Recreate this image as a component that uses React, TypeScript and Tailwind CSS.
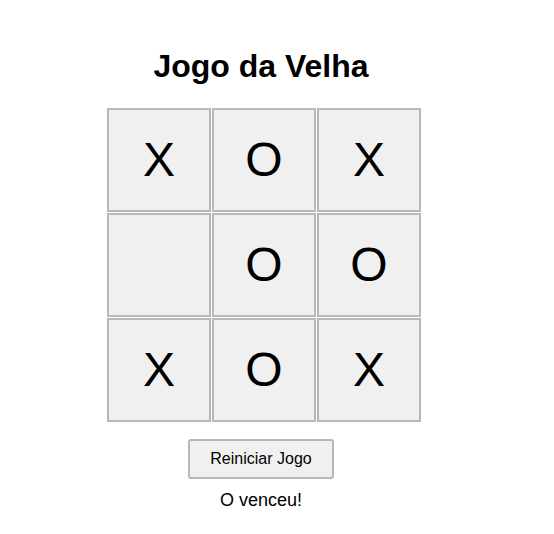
import React, { useState } from 'react';

type Cell = 'X' | 'O' | null;

const initialBoard: Cell[] = ['X', 'O', 'X', null, 'O', 'O', 'X', 'O', 'X'];

const App: React.FC = () => {
  const [board, setBoard] = useState<Cell[]>(initialBoard);
  const [status, setStatus] = useState<string>('O venceu!');

  const resetGame = () => {
    setBoard(Array(9).fill(null));
    setStatus('');
  };

  return (
    <div className="min-h-[534px] bg-white font-['Liberation_Sans',Arial,sans-serif] text-black">
      <div className="w-[522px] flex flex-col items-center pt-[48px]">
        <h1 className="text-[32px] leading-[37px] font-bold">Jogo da Velha</h1>

        {/* Board */}
        <div className="mt-[23px] ml-[6px] grid grid-cols-[repeat(3,104px)] gap-[1px]">
          {board.map((cell, i) => (
            <div
              key={i}
              className="w-[104px] h-[104px] border-2 border-[#b8b8b8] bg-[#f0f0f0] flex items-center justify-center text-[48px] leading-none"
            >
              {cell}
            </div>
          ))}
        </div>

        <button
          onClick={resetGame}
          className="mt-[17px] h-[40px] px-[20px] border-2 border-[#b8b8b8] rounded-[3px] bg-[#f0f0f0] text-[16px] leading-[18px]"
        >
          Reiniciar Jogo
        </button>

        <p className="mt-[11px] text-[18px] leading-[21px]">{status}</p>
      </div>
    </div>
  );
};

export default App;
